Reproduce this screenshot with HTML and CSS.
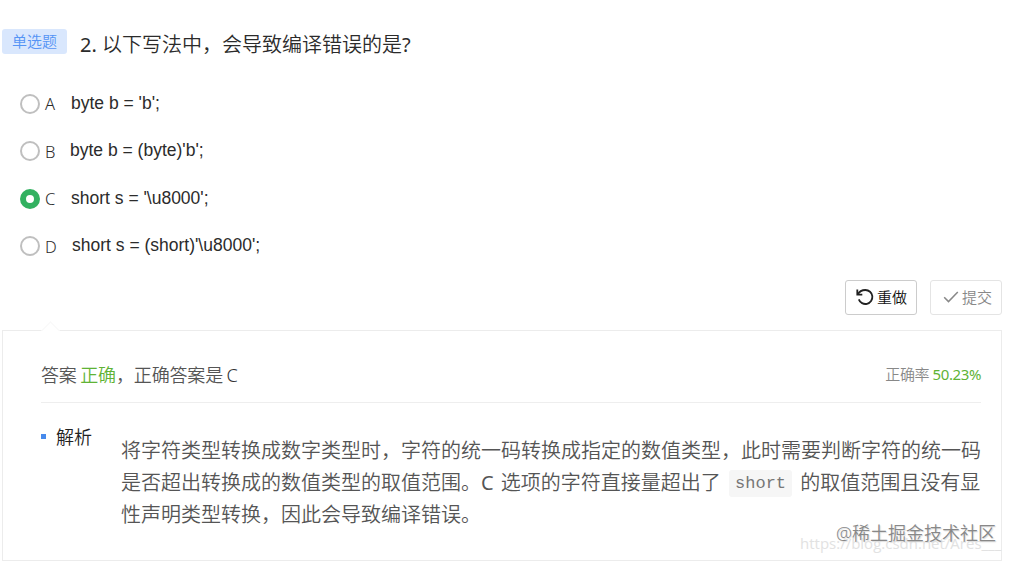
FILE: index.html
```html
<!DOCTYPE html>
<html lang="zh-CN">
<head>
    <meta charset="UTF-8">
    <meta name="viewport" content="width=device-width, initial-scale=1.0">
    <title>单选题</title>
    <link rel="stylesheet" href="styles.css">
</head>
<body>
    <div class="question">
        <span class="tag">单选题</span>
        <h1><span class="latin">2.</span> 以下写法中，会导致编译错误的是<span class="latin">?</span></h1>
    </div>

    <ul class="options">
        <li><span class="radio"></span><span class="letter">A</span><span class="text text-a">byte b = 'b';</span></li>
        <li><span class="radio"></span><span class="letter">B</span><span class="text text-b">byte b = (byte)'b';</span></li>
        <li><span class="radio checked"></span><span class="letter">C</span><span class="text text-c">short s = '\u8000';</span></li>
        <li><span class="radio"></span><span class="letter">D</span><span class="text text-d">short s = (short)'\u8000';</span></li>
    </ul>

    <div class="actions">
        <button class="redo">
            <svg width="18" height="18" viewBox="0 0 18 18" fill="none" stroke="#222" stroke-width="1.8">
                <path d="M1.3 1.6v5h5"/>
                <path d="M1.8 6.4C3.2 3.6 6 2 9.4 2a7 7 0 1 1-6.6 9.4"/>
            </svg>
            <span>重做</span>
        </button>
        <button class="submit">
            <svg width="16" height="14" viewBox="0 0 16 14" fill="none" stroke="#888" stroke-width="1.5">
                <path d="M1.2 7.2l4.3 4.4L14.8 2"/>
            </svg>
            <span>提交</span>
        </button>
    </div>

    <div class="result">
        <span class="arrow"></span>
        <div class="answer">
            <div class="verdict">答案 <span class="green">正确</span>，正确答案是 <span class="key">C</span></div>
            <div class="rate">正确率 <span class="green latin">50.23%</span></div>
        </div>
        <div class="analysis">
            <div class="label">解析</div>
            <p>将字符类型转换成数字类型时，字符的统一码转换成指定的数值类型，此时需要判断字符的统一码<br>是否超出转换成的数值类型的取值范围。<span class="latin">C</span> 选项的字符直接量超出了 <code>short</code> 的取值范围且没有显<br>性声明类型转换，因此会导致编译错误。</p>
        </div>
    </div>

    <div class="mark mark-url">https://blog.csdn.net/Ares___</div>
    <div class="mark mark-site">@稀土掘金技术社区</div>
</body>
</html>
```

FILE: styles.css
```css
* {
    box-sizing: border-box;
}
body {
    position: relative;
    width: 1014px;
    height: 561px;
    margin: 0;
    padding: 29px 12px 0 2px;
    overflow: hidden;
    background: #fff;
    color: #2b2b2b;
    font-family: "Noto Sans", "Noto Sans CJK SC", sans-serif;
    font-weight: 350;
}
.latin {
    font-weight: 400;
}
.question {
    display: flex;
    height: 30px;
    gap: 13px;
}
.tag {
    width: 65px;
    height: 25px;
    border-radius: 3px;
    background: #d9e7fd;
    color: #5594f5;
    font-size: 15px;
    line-height: 25px;
    text-align: center;
}
h1 {
    margin: 0;
    font-size: 20px;
    font-weight: 350;
    line-height: 31px;
    white-space: nowrap;
}
.options {
    margin: 21px 0 0 18px;
    padding: 0;
    list-style: none;
}
.options li {
    display: flex;
    align-items: center;
    height: 47.5px;
}
.radio {
    width: 20px;
    height: 20px;
    border: 2px solid #bfbfbf;
    border-radius: 50%;
}
.radio.checked {
    border: 6px solid #32b160;
}
.letter {
    width: 26px;
    padding-left: 5px;
    font-size: 16.5px;
}
.text {
    margin-top: -1px;
    font-family: "Liberation Sans", Arial, sans-serif;
    font-size: 17.5px;
    font-weight: 400;
    white-space: nowrap;
}
.text-a {
    padding-left: 5px;
}
.text-b {
    padding-left: 4px;
}
.text-c {
    padding-left: 5px;
}
.text-d {
    padding-left: 6px;
}
.actions {
    display: flex;
    justify-content: flex-end;
    gap: 13px;
    margin-top: 10px;
}
button {
    display: flex;
    align-items: center;
    justify-content: center;
    gap: 3px;
    width: 72px;
    height: 35px;
    padding: 0 0 2px 1px;
    border: 1px solid #ccc;
    border-radius: 3px;
    background: #fff;
    color: #111;
    font-family: inherit;
    font-size: 15px;
    font-weight: 350;
}
.submit {
    padding-left: 3px;
    border-color: #e4e4e4;
    color: #888;
}
.result {
    position: relative;
    height: 231px;
    margin-top: 15px;
    padding: 18px 20px 0 38px;
    border: 1px solid #ececec;
    color: #555;
}
.arrow {
    position: absolute;
    top: -7px;
    left: 41px;
    width: 13px;
    height: 13px;
    border: 1px solid #f8f8f8;
    border-right: 0;
    border-bottom: 0;
    background: #fff;
    transform: rotate(45deg);
}
.answer {
    display: flex;
    justify-content: space-between;
    align-items: center;
    height: 54px;
    padding-bottom: 4px;
    border-bottom: 1px solid #eee;
    font-size: 18px;
}
.verdict {
    letter-spacing: -0.15px;
    word-spacing: -1px;
}
.green {
    color: #60b335;
}
.key {
    color: #333;
}
.rate {
    color: #888;
    font-size: 15px;
    letter-spacing: -0.4px;
}
.analysis {
    display: flex;
}
.label {
    display: flex;
    align-items: center;
    gap: 10px;
    width: 80px;
    height: 30px;
    margin-top: 18px;
    color: #222;
    font-size: 18px;
}
.label::before {
    content: "";
    width: 5px;
    height: 5px;
    background: #478aec;
}
p {
    margin: 32px 0 0;
    font-size: 20px;
    line-height: 32px;
    white-space: nowrap;
    word-spacing: 2px;
}
code {
    display: inline-block;
    height: 27px;
    padding: 0 6px;
    margin: 0 1px;
    border-radius: 3px;
    background: #f6f6f6;
    color: #777;
    font-family: "Liberation Mono", monospace;
    font-size: 17px;
    line-height: 28px;
    vertical-align: 2px;
}
.mark {
    position: absolute;
    white-space: nowrap;
}
.mark-url {
    top: 534px;
    left: 800px;
    color: #e2e2e2;
    font-family: "Open Sans", sans-serif;
    font-size: 15px;
    font-weight: 400;
    line-height: 18px;
}
.mark-site {
    top: 521px;
    left: 836px;
    color: #888;
    font-size: 18px;
    line-height: 24px;
    text-shadow: 1px 1px 1px #ddd;
}
```
